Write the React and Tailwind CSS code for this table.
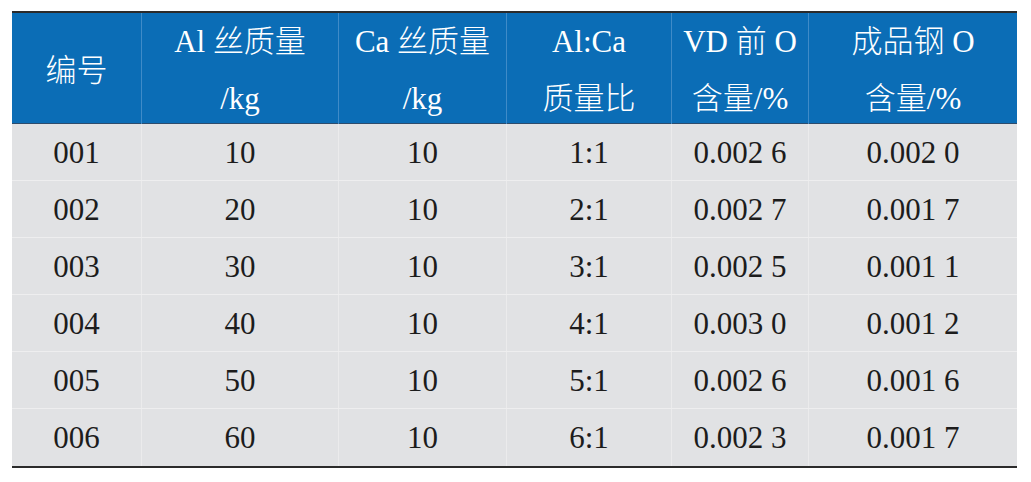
import React from 'react';

const headers = [
  ['编号'],
  ['Al 丝质量', '/kg'],
  ['Ca 丝质量', '/kg'],
  ['Al:Ca', '质量比'],
  ['VD 前 O', '含量/%'],
  ['成品钢 O', '含量/%'],
];

const rows = [
  ['001', '10', '10', '1:1', '0.002 6', '0.002 0'],
  ['002', '20', '10', '2:1', '0.002 7', '0.001 7'],
  ['003', '30', '10', '3:1', '0.002 5', '0.001 1'],
  ['004', '40', '10', '4:1', '0.003 0', '0.001 2'],
  ['005', '50', '10', '5:1', '0.002 6', '0.001 6'],
  ['006', '60', '10', '6:1', '0.002 3', '0.001 7'],
];

const cols = 'grid grid-cols-[130px_197px_168px_165px_137px_208px]';

export default function App() {
  return (
    <div className="w-[1031px] h-[482px] bg-white pt-[11px] pl-[12px] font-[family-name:'Liberation_Serif','Noto_Sans_CJK_SC',serif]">
      <div className="w-[1005px] border-t-2 border-b-2 border-[#2b2b2b]">
        {/* header */}
        <div className={`${cols} h-[111px] bg-[#0b6db6] border-b border-[#2d4c6c] text-white text-[31px] font-light`}>
          {headers.map((h, i) => (
            <div
              key={i}
              className={`flex flex-col items-center justify-center leading-[57px] pb-[8px] ${i < 5 ? 'border-r border-[#3f8bc8]' : ''}`}
            >
              {h.map((line, j) => (
                <span key={j} className="whitespace-pre">{line}</span>
              ))}
            </div>
          ))}
        </div>
        {/* body */}
        {rows.map((r, ri) => (
          <div
            key={ri}
            className={`${cols} h-[57px] bg-[#e1e2e4] text-[#1c1c1c] text-[31px] ${ri < rows.length - 1 ? 'border-b border-[#eeeeef]' : ''}`}
          >
            {r.map((c, ci) => (
              <div
                key={ci}
                className={`flex items-center justify-center leading-none ${ci < 5 ? 'border-r border-[#ebebec]' : ''}`}
              >
                {c}
              </div>
            ))}
          </div>
        ))}
      </div>
    </div>
  );
}
